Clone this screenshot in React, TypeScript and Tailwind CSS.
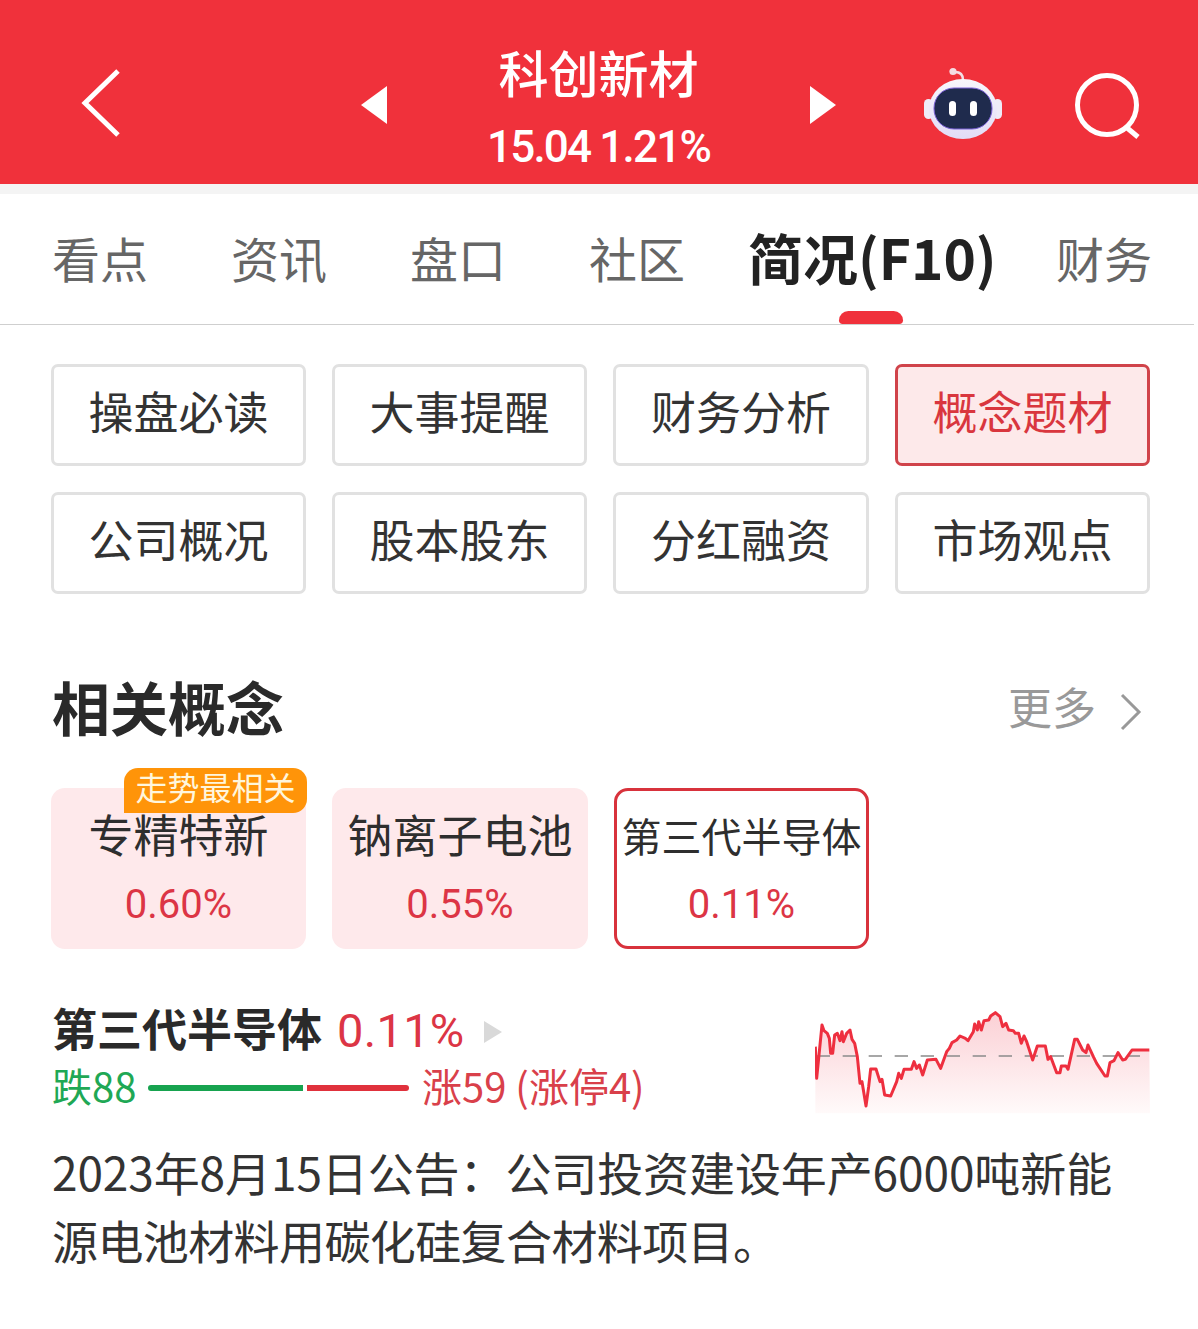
const CJK = "font-['Noto_Sans_CJK_SC',sans-serif]";

const tabs = [
  { label: "看点", cls: "w-[179px]" },
  { label: "资讯", cls: "w-[179px]" },
  { label: "盘口", cls: "w-[179px]" },
  { label: "社区", cls: "w-[159px]" },
];

const menus = [
  "操盘必读",
  "大事提醒",
  "财务分析",
  "概念题材",
  "公司概况",
  "股本股东",
  "分红融资",
  "市场观点",
];

const linePoints =
  "46,140 50,235 66,75 72,92 82,100 88,115 92,160 98,160 104,105 112,100 120,122 126,95 130,125 140,100 150,90 156,118 164,130 172,170 180,250 186,245 198,318 206,260 212,207 228,207 240,245 246,238 254,285 272,288 290,245 296,220 304,235 312,208 334,208 342,185 350,205 358,195 368,225 382,180 408,178 422,205 440,155 448,145 456,128 470,120 480,108 496,115 504,122 520,95 524,72 532,90 536,65 544,90 552,62 566,60 572,48 586,38 600,50 608,80 618,70 626,90 640,92 646,100 656,100 664,130 672,108 680,125 698,180 712,138 736,138 744,178 752,170 770,218 780,218 784,198 798,198 804,208 824,118 832,118 848,150 858,158 864,135 880,170 890,190 915,228 922,228 930,188 942,182 954,158 968,180 976,178 996,150 1048,150";

function Robot() {
  return (
    <svg width="82" height="74" viewBox="0 0 82 74">
      <defs>
        <linearGradient id="shell" x1="0" y1="0" x2="0" y2="1">
          <stop offset="0" stopColor="#f8f6fc" />
          <stop offset="1" stopColor="#e2dcf6" />
        </linearGradient>
      </defs>
      <path d="M41 13 C41 7 38 5 33 5" fill="none" stroke="#f3dfe6" strokeWidth="2.5" />
      <circle cx="31" cy="4.5" r="3.6" fill="#f5dbe2" />
      <rect x="2" y="32" width="9" height="20" rx="4.5" fill="#efecf8" />
      <rect x="71" y="32" width="9" height="20" rx="4.5" fill="#efecf8" />
      <ellipse cx="41" cy="42" rx="34" ry="30" fill="url(#shell)" />
      <rect x="12" y="21" width="58" height="41" rx="20" fill="#1f2b4d" stroke="#7d63d8" strokeWidth="1" />
      <rect x="27" y="34" width="7" height="15" rx="3.5" fill="#fff" />
      <rect x="48" y="34" width="7" height="15" rx="3.5" fill="#fff" />
    </svg>
  );
}

function Chart() {
  return (
    <svg width="335" height="104" viewBox="45 30 1005 312" className="shrink-0">
      <defs>
        <linearGradient id="area" x1="0" y1="0" x2="0" y2="1">
          <stop offset="0" stopColor="#fbd0d5" />
          <stop offset="1" stopColor="#fffafa" />
        </linearGradient>
      </defs>
      <polygon points={`46,340 ${linePoints} 1050,340`} fill="url(#area)" />
      <line x1="50" y1="168" x2="1020" y2="168" stroke="#8a8a8a" strokeWidth="4" strokeDasharray="40 38" />
      <polyline points={linePoints} fill="none" stroke="#ee2f3f" strokeWidth="9" strokeLinejoin="round" />
    </svg>
  );
}

export default function App() {
  return (
    <div className={`w-[1198px] h-[1329px] bg-white overflow-hidden ${CJK}`}>
      <header className="h-[184px] bg-[#f0313b] flex text-white">
        <svg width="42" height="72" viewBox="0 0 42 72" className="ml-[80px] mt-[67px] shrink-0">
          <path d="M38 4 L5 36 L38 68" fill="none" stroke="#fff" strokeWidth="5" />
        </svg>
        <div className="ml-[239px] mt-[86px] w-0 h-0 border-y-[19px] border-y-transparent border-r-[26px] border-r-white shrink-0" />
        <div className="w-[423px] flex flex-col items-center shrink-0">
          <div className="text-[50px] leading-[56px] mt-[43px] font-medium">科创新材</div>
          <div className="text-[44px] leading-[48px] mt-[24px] font-['Roboto',sans-serif] font-medium tracking-[-1.8px]">15.04 1.21%</div>
        </div>
        <div className="mt-[86px] w-0 h-0 border-y-[19px] border-y-transparent border-l-[26px] border-l-white shrink-0" />
        <div className="ml-[86px] mt-[67px] shrink-0">
          <Robot />
        </div>
        <svg width="68" height="68" viewBox="0 0 68 68" className="ml-[70px] mt-[73px] shrink-0">
          <circle cx="33" cy="32" r="29.5" fill="none" stroke="#fff" strokeWidth="5" />
          <path d="M52 54 L64 64" stroke="#fff" strokeWidth="5" />
        </svg>
      </header>
      <div className="h-[10px] bg-[#f4f4f4]" />

      <nav className="h-[131px] w-[1194px] border-b border-[#cfcfcf] flex pl-[52px] text-[#666666] text-[48px]">
        {tabs.map((t) => (
          <div key={t.label} className={`${t.cls} pt-[32px] leading-[62px] shrink-0`}>
            {t.label}
          </div>
        ))}
        <div className="w-[308px] shrink-0 flex flex-col">
          <div className="pt-[31px] leading-[62px] text-[55px] font-bold text-[#222222] h-[117px] whitespace-nowrap">简况(F10)</div>
          <div className="w-[64px] h-[13px] ml-[91px] rounded-t-[10px] rounded-b-[4px] bg-[#f0313b]" />
        </div>
        <div className="pt-[32px] leading-[62px] shrink-0">财务</div>
      </nav>

      <div className="grid grid-cols-[255px_255px_256px_255px] gap-x-[26px] gap-y-[26px] ml-[51px] mt-[39px] w-[1099px]">
        {menus.map((m) => (
          <div
            key={m}
            className={
              m === "概念题材"
                ? "h-[102px] pb-[8px] rounded-[7px] border-[3px] border-[#d0434a] bg-[#fde9ea] text-[#d9363e] text-[45px] flex items-center justify-center"
                : "h-[102px] pb-[8px] rounded-[7px] border-[3px] border-[#e1e1e1] text-[#333333] text-[45px] flex items-center justify-center"
            }
          >
            {m}
          </div>
        ))}
      </div>

      <div className="flex items-center justify-between ml-[52px] mr-[56px] mt-[72px] h-[80px]">
        <div className="text-[58px] font-bold text-[#2a2a2a] leading-[80px]">相关概念</div>
        <div className="flex items-center text-[#999999] text-[44px]">
          更多
          <svg width="22" height="38" viewBox="0 0 22 38" className="ml-[24px] mt-[12px]">
            <path d="M2 2 L19 19 L2 36" fill="none" stroke="#999999" strokeWidth="3" />
          </svg>
        </div>
      </div>

      <div className="flex gap-x-[26px] ml-[51px] mt-[42px]">
        <div className="relative w-[255px] h-[161px] rounded-[14px] bg-[#fee9eb] flex flex-col items-center">
          <div className="absolute left-[73px] -top-[20px] w-[183px] h-[45px] rounded-t-[14px] rounded-br-[14px] bg-[#ff9409] text-[#fff6dc] text-[32px] leading-[36px] text-center">
            走势最相关
          </div>
          <div className="text-[45px] leading-[54px] text-[#2e2e2e] mt-[19px]">专精特新</div>
          <div className="text-[40px] leading-[48px] text-[#dc3545] mt-[20px] font-['Roboto',sans-serif]">0.60%</div>
        </div>
        <div className="w-[256px] h-[161px] rounded-[14px] bg-[#fee9eb] flex flex-col items-center">
          <div className="text-[45px] leading-[54px] text-[#2e2e2e] mt-[19px]">钠离子电池</div>
          <div className="text-[40px] leading-[48px] text-[#dc3545] mt-[20px] font-['Roboto',sans-serif]">0.55%</div>
        </div>
        <div className="w-[255px] h-[161px] rounded-[14px] border-[3px] border-[#d8323c] flex flex-col items-center">
          <div className="text-[40px] leading-[54px] text-[#2e2e2e] mt-[17px] whitespace-nowrap">第三代半导体</div>
          <div className="text-[40px] leading-[48px] text-[#dc3545] mt-[19px] font-['Roboto',sans-serif]">0.11%</div>
        </div>
      </div>

      <div className="flex justify-between ml-[52px] mr-[48px] mt-[57px]">
        <div>
          <div className="flex items-center h-[56px] mt-[-6px]">
            <span className="text-[45px] font-bold text-[#2a2a2a] leading-[56px]">第三代半导体</span>
            <span className="text-[47px] text-[#dc3545] ml-[15px] mt-[6px] leading-[56px] font-['Roboto',sans-serif] tracking-[0.3px]">0.11%</span>
            <span className="ml-[19px] mt-[8px] w-0 h-0 border-y-[11px] border-y-transparent border-l-[18px] border-l-[#d9d9d9]" />
          </div>
          <div className="flex items-center h-[50px] mt-[4px] text-[40px] leading-[50px] whitespace-nowrap">
            <span className="text-[#1fa855] w-[96px]">跌88</span>
            <span className="h-[6px] w-[155px] mt-[6px] bg-[#17a34f] rounded-l-[3px]" />
            <span className="h-[6px] w-[102px] mt-[6px] ml-[4px] bg-[#e0313c] rounded-r-[3px]" />
            <span className="text-[#d9404a] ml-[13px]">涨59 (涨停4)</span>
          </div>
        </div>
        <div className="mt-[4px]">
          <Chart />
        </div>
      </div>

      <div className="ml-[52px] mt-[23px] text-[46px] leading-[68px] text-[#333333] whitespace-nowrap">
        <p className="tracking-[-0.1px]">2023年8月15日公告：公司投资建设年产6000吨新能</p>
        <p className="tracking-[-0.6px]">源电池材料用碳化硅复合材料项目。</p>
      </div>
    </div>
  );
}
